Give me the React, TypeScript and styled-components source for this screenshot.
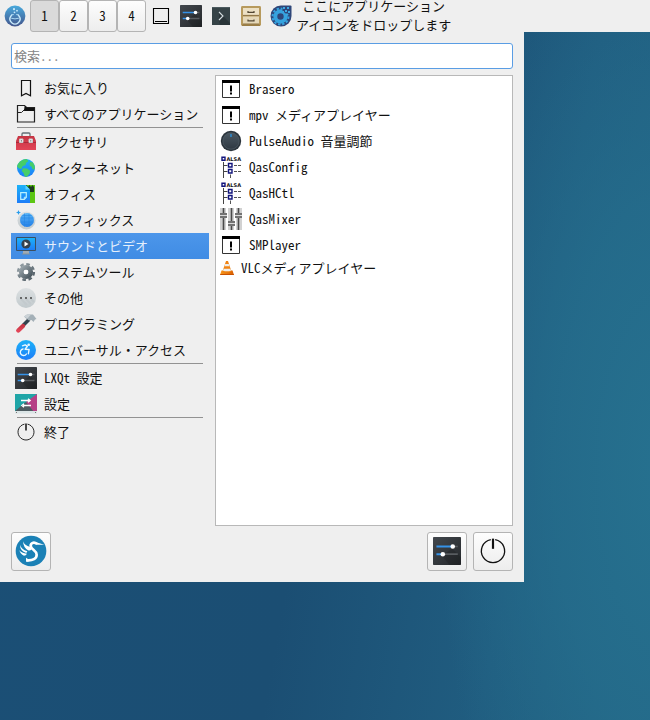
import React, { useState } from "react";
import styled, { createGlobalStyle } from "styled-components";

const GlobalStyle = createGlobalStyle`
  * { box-sizing: border-box; }
  body {
    margin: 0;
    font: 13px/19px "Noto Sans CJK JP", sans-serif;
    font-feature-settings: "hwid", "liga" 0;
    color: #111;
  }
  button, input { font: inherit; font-feature-settings: inherit; color: inherit; }
  svg { display: block; }
`;

const Desktop = styled.div`
  min-height: 100vh;
  background:
    radial-gradient(ellipse 36% 75% at 103% 65%, #26718f 0%, rgba(37, 110, 141, 0.75) 50%, rgba(37, 110, 141, 0) 100%),
    linear-gradient(100deg, #1b4f76 0%, #1b4e73 50%, #205d80 78%, #236383 100%);
`;

const Panel = styled.header`
  display: flex;
  align-items: center;
  height: 32px;
  background: #efefef;
`;

const PanelButton = styled.button`
  display: grid;
  place-items: center;
  flex: none;
  width: 30px;
  height: 32px;
  padding: 0;
  border: 0;
  background: none;
`;

const Pager = styled.div`
  display: flex;
  flex: none;
`;

const bevel = `
  border: 1px solid #b4b4b4;
  border-radius: 3px;
  background: linear-gradient(#fdfdfd, #ededed);
`;

const PagerButton = styled.button`
  ${bevel}
  width: 29px;
  height: 32px;
  padding: 0 0 2px;
  &[aria-pressed="true"] { background: #dadada; }
`;

const DropHint = styled.p`
  margin: 0;
  padding-bottom: 2px;
  text-align: center;
  white-space: pre-line;
`;

const Menu = styled.main`
  display: flex;
  flex-direction: column;
  gap: 6px;
  width: 524px;
  max-width: 100%;
  padding: 11px;
  background: #efefef;
`;

const Search = styled.input`
  width: 100%;
  height: 26px;
  padding: 0 2px 2px;
  border: 1px solid #5a9de4;
  border-radius: 3px;
  outline: 0;
  background: #fff;
  &::placeholder { color: #858585; opacity: 1; }
`;

const Columns = styled.div`
  display: grid;
  grid-template-columns: 198px 1fr;
  gap: 6px;
  min-height: 451px;
`;

const Categories = styled.nav`
  display: flex;
  flex-direction: column;
`;

const Row = styled.button<{ $compact?: boolean }>`
  display: flex;
  align-items: center;
  gap: 7px;
  width: 100%;
  height: ${(p) => (p.$compact ? 20 : 26)}px;
  padding: 0 4px;
  border: 0;
  background: none;
  text-align: left;
  white-space: nowrap;
  &[aria-current="true"] {
    background: linear-gradient(#4c96ea, #408ce4);
    color: #e4effc;
  }
`;

const IconSlot = styled.span<{ $compact?: boolean }>`
  flex: none;
  width: ${(p) => (p.$compact ? 14 : 22)}px;
`;

const Label = styled.span`
  padding-bottom: 2px;
`;

const Separator = styled.hr`
  width: calc(100% - 12px);
  height: 2px;
  margin: 0 6px;
  border: 0;
  border-top: 1px solid #929292;
`;

const AppList = styled.ul`
  margin: 0;
  padding: 0;
  list-style: none;
  border: 1px solid #b8b8b8;
  background: #fff;
`;

const Footer = styled.footer`
  display: flex;
  gap: 6px;
`;

const ToolButton = styled.button<{ $start?: boolean }>`
  ${bevel}
  display: grid;
  place-items: center;
  width: 40px;
  height: 39px;
  padding: 0 0 2px;
  margin-right: ${(p) => (p.$start ? "auto" : "0")};
`;

const HiddenDefs = styled.svg`
  position: absolute;
`;

type IconProps = { size?: number };

const Svg = ({ size = 22, box = 22, children }: { size?: number; box?: number; children: React.ReactNode }) => (
  <svg width={size} height={size} viewBox={`0 0 ${box} ${box}`} fill="none" aria-hidden="true">
    {children}
  </svg>
);

const Gradients = () => (
  <HiddenDefs width="0" height="0" aria-hidden="true">
    <defs>
      <linearGradient id="dark" x1="0" y1="0" x2="1" y2="1"><stop stopColor="#42474d" /><stop offset="1" stopColor="#25282b" /></linearGradient>
      <linearGradient id="flask" x1="0" y1="0" x2="0" y2="1"><stop stopColor="#49a9dc" /><stop offset="1" stopColor="#43568d" /></linearGradient>
      <linearGradient id="red" x1="0" y1="0" x2="0" y2="1"><stop stopColor="#c53543" /><stop offset="1" stopColor="#e24557" /></linearGradient>
      <linearGradient id="sky" x1="0" y1="0" x2="0" y2="1"><stop stopColor="#1cb2f8" /><stop offset="1" stopColor="#1d7df8" /></linearGradient>
      <linearGradient id="lens" x1="0" y1="0" x2="0" y2="1"><stop stopColor="#58b4f6" /><stop offset="1" stopColor="#2580ea" /></linearGradient>
      <linearGradient id="steel" x1="0" y1="0" x2="1" y2="1"><stop stopColor="#99a4aa" /><stop offset="1" stopColor="#4a575f" /></linearGradient>
      <linearGradient id="silver" x1="0" y1="0" x2="0" y2="1"><stop stopColor="#dce0e2" /><stop offset="1" stopColor="#c2cacd" /></linearGradient>
      <linearGradient id="knob" x1="0" y1="0" x2="0" y2="1"><stop stopColor="#4b5862" /><stop offset="1" stopColor="#2f3943" /></linearGradient>
      <linearGradient id="cone" x1="0" y1="0" x2="1" y2="0"><stop stopColor="#f8981d" /><stop offset="1" stopColor="#d85c00" /></linearGradient>
    </defs>
  </HiddenDefs>
);

const FlaskIcon = () => (
  <Svg>
    <circle cx="11" cy="11" r="10.4" fill="url(#flask)" />
    <path d="M8 10 6.800 11.200a5 5 0 1 0 8.400 0L14 10" stroke="#c9eafa" strokeWidth="1.400" />
    <path d="M7.200 9.600h2.600M12.200 9.600h2.600M7.200 13.200q3.800 1.400 7.600 0" stroke="#a9d8f1" />
    <circle cx="10" cy="4.200" r="1.100" fill="#c6e8fa" />
    <circle cx="13" cy="5.700" r=".9" fill="#c6e8fa" />
    <circle cx="10.500" cy="7.300" r=".9" fill="#c6e8fa" />
  </Svg>
);

const DesktopIcon = () => (
  <Svg><path d="M3.500 3.500h15v15h-15zM5 16.500h12" stroke="#000" strokeWidth="1.100" /></Svg>
);

const SlidersIcon = ({ size = 22 }: IconProps) => (
  <Svg size={size}>
    <rect width="22" height="22" rx=".6" fill="url(#dark)" />
    <path d="m15 9 7 7v6H13L7 15Z" fill="#000" opacity=".15" />
    <path d="M15 7.500h4.500M7 13.500h12.500" stroke="#585c60" strokeWidth="1.300" />
    <path d="M2.700 7.500H15M2.700 13.500H7" stroke="#3592e8" strokeWidth="1.500" />
    <circle cx="15.500" cy="7.500" r="1.800" fill="#fff" />
    <circle cx="7.700" cy="13.500" r="1.800" fill="#fff" />
  </Svg>
);

const TerminalIcon = () => (
  <Svg size={18} box={18}>
    <rect width="18" height="18" fill="#364347" />
    <path d="M0 0h18v1H0Z" fill="#4c5a5f" />
    <path d="m7 5 4 4 7 7v2H8L7 13Z" fill="#293438" />
    <path d="m7 5 4 4-4 4" stroke="#d5dde0" strokeWidth="1.100" />
  </Svg>
);

const CabinetIcon = () => (
  <Svg size={20} box={20}>
    <rect width="20" height="20" rx="1.400" fill="#b79a5d" />
    <path d="M1 18.500h18V20H1Z" fill="#9a7d44" />
    <rect x="2" y="2" width="16" height="7.400" fill="#ece0c4" />
    <rect x="2" y="10.500" width="16" height="7.500" fill="#e5d8b9" />
    <path d="M2 9.400h16M2 18h16" stroke="#8b7242" />
    <path d="M7 5v1.300h6V5M7 13.500v1.300h6v-1.300" stroke="#524632" strokeWidth="1.200" />
  </Svg>
);

const GearDropIcon = () => (
  <Svg>
    <path d="M11 .5h9.500q1 0 1 1V11A10.500 10.500 0 1 1 11 .5Z" fill="#2e4679" />
    <circle cx="10.500" cy="11.500" r="5.200" stroke="#35a3df" strokeWidth="4" />
    <circle cx="10.500" cy="11.500" r="8" stroke="#35a3df" strokeWidth="2" strokeDasharray="2.400 1.790" />
    <path d="M12.500 1h8.500v8.500h-4l-4.500-3.500Z" fill="#2e4679" />
    <path d="M13 2h2v2h-2zM17 2h2v2h-2zM15 5h2v2h-2zM18 6h2v2h-2zM12.500 6H14v1.500h-1.500zM16 8.500h2v2h-2z" fill="#3da8e2" />
  </Svg>
);

const BookmarkIcon = () => (
  <Svg><path d="M6.500 3.500h9v15.200L11 16.500l-4.500 2.200Z" stroke="#111" strokeWidth="1.200" /></Svg>
);

const FolderIcon = () => (
  <Svg>
    <path d="M2.500 2.500h7l2 2h8v14.500h-17Z" stroke="#222" strokeWidth="1.200" />
    <path d="M2.500 9.500h4l3-3h10" stroke="#222" />
    <path d="M9.500 3.500h1.500l1 1.500h7.500v3H9Z" fill="#111" />
  </Svg>
);

const ToolboxIcon = () => (
  <Svg>
    <path d="M7 6V3q0-1 1-1h6q1 0 1 1v3" stroke="#657077" strokeWidth="1.300" />
    <path d="M3 5h16l2 5v9H1v-9Z" fill="url(#red)" />
    <path d="M1 11h20v1H1Z" fill="#a82b3a" />
    <path d="M4.500 8H8v3.500H4.500zM14 8h3.500v3.500H14z" fill="#fff" stroke="#c6cacc" />
    <path d="M5.700 9.200h1.200v1.200H5.700zM15.200 9.200h1.200v1.200h-1.200z" fill="#555" />
  </Svg>
);

const GlobeIcon = () => (
  <Svg>
    <circle cx="11" cy="11" r="9" fill="url(#sky)" />
    <path d="M5 4.500q5-3 7-2.300l1.400 2-2.200 1.500-.8 2.600-2.700.8L6.300 12l-2.600-.7L2 9.500Q2.600 6.500 5 4.500ZM8 11.200l4 .3 3.200 2.200-.6 3-2.700 3.100h-2L8.500 16l-1.800-2ZM15 5l3 .6q2.200 3 1.800 7l-2.200-.4-1.100-2.400-2-1.600Z" fill="#46cd68" />
  </Svg>
);

const OfficeIcon = () => (
  <Svg>
    <path d="M11 2h9v18h-9Z" fill="#5cc613" />
    <path d="M9 2h2.500l1.500 2 1.500-2L16 4l1.500-2L19 4v5h-6Z" fill="#1d3b20" />
    <path d="M2 2h8.500L15 6.500V20H2Z" fill="url(#sky)" />
    <path d="m10.500 2 4.500 4.500h-4.500Z" fill="#54d4ff" />
    <path d="M5.700 9.700h5.600v4.600l-2 2H5.700Z" stroke="#b9f0ff" strokeWidth="1.200" />
    <path d="M9.300 16.200v-2h2" stroke="#b9f0ff" />
  </Svg>
);

const GraphicsIcon = () => (
  <Svg>
    <circle cx="11.500" cy="11.500" r="9" fill="url(#silver)" />
    <circle cx="12" cy="11" r="7" fill="url(#lens)" />
    <path d="M5.500 9h13M5.500 13h13M9.500 4.500v13M14 4.500v13M7.500 6.500h9M7.500 15.500h9" stroke="#2787e3" strokeWidth=".6" />
    <path d="m3.500 1 .7 1.800 1.800.7-1.800.7L3.500 6l-.7-1.800L1 3.500l1.800-.7Z" fill="#299eed" />
  </Svg>
);

const VideoIcon = () => (
  <Svg>
    <path d="M8 16h6v3H8Z" fill="#a0abb3" />
    <path d="M7 18.500h8v1H7Z" fill="#84919b" />
    <rect x="1" y="2" width="20" height="14" rx="1" fill="#3a4f62" />
    <path d="M2 3h18v12H2Z" fill="url(#sky)" />
    <circle cx="11" cy="9" r="4.600" fill="#34414f" />
    <path d="m9.500 6.500 4 2.500-4 2.500Z" fill="#fff" />
  </Svg>
);

const GearIcon = () => (
  <Svg>
    <circle cx="11" cy="11" r="4.700" strokeWidth="4.800" stroke="url(#steel)" />
    <circle cx="11" cy="11" r="7.900" strokeWidth="2.400" strokeDasharray="3.600 2.605" stroke="url(#steel)" />
    <circle cx="11" cy="11" r="2.300" fill="#fff" />
  </Svg>
);

const DotsIcon = () => (
  <Svg>
    <circle cx="11" cy="11" r="10" fill="url(#silver)" />
    <path d="m6 12 6 6M11 12l5 5M16 12l3 3" stroke="#c3cacd" strokeWidth="2" />
    <circle cx="6" cy="11" r="1" fill="#444" /><circle cx="11" cy="11" r="1" fill="#444" /><circle cx="16" cy="11" r="1" fill="#444" />
  </Svg>
);

const HammerIcon = () => (
  <Svg>
    <path d="M14 6.500 8 12.500" stroke="#34434d" strokeWidth="3.600" />
    <path d="m8 13-4.700 4.500" stroke="url(#red)" strokeWidth="4.400" strokeLinecap="round" />
    <path d="m9 3.500 3-2h6l3.500 4.500-1.500.5-1.500 2.500-2-2-2.500.5L10.500 5Z" fill="#a4b0b7" />
    <path d="m9 3.500 3-2h4l-3.500 4Z" fill="#ccd3d7" />
  </Svg>
);

const AccessIcon = () => (
  <Svg>
    <circle cx="11" cy="11" r="10" fill="url(#sky)" />
    <circle cx="13.700" cy="5.800" r="1.300" fill="#e9f8ff" />
    <path d="m7.500 6.800 2.600-1 2.300 1.400-2.300 3 4 .3-.7 4.200M8 10a3.300 3.300 0 1 0 3.400 5" stroke="#e9f8ff" strokeWidth="1.400" strokeLinejoin="round" strokeLinecap="round" />
  </Svg>
);

const PreferencesIcon = () => (
  <Svg>
    <path d="M0 1h22v18H0Z" fill="#1fa5a7" />
    <path d="M22 1v18h-5L11 9Z" fill="#b64086" />
    <path d="m0 18 11-9 8 10H0Z" fill="#4d5b60" />
    <path d="M0 18h22v2.500H0Z" fill="#dbe5e6" />
    <path d="M6 7.500h9M8 12.500h8M13 5.700l2.200 1.800L13 9.300M9 10.700l-2.200 1.800L9 14.300" stroke="#fff" strokeWidth="1.300" />
    <path d="M1 19.500h1M20 19.500h1" stroke="#777" />
  </Svg>
);

const PowerIcon = ({ size = 22 }: IconProps) => (
  <Svg size={size}>
    <path d="M9.500 3.150a8 8 0 1 0 3 0" stroke="#111" strokeWidth=".9" />
    <path d="M11 2.500v7" stroke="#111" strokeWidth="1.500" />
  </Svg>
);

const WindowIcon = () => (
  <Svg>
    <path d="M2.500 2.500h17v17h-17Z" fill="#fff" stroke="#333" />
    <path d="M2 2h18v3H2Z" fill="#000" />
    <path d="M11 7.500v6M11 14.500v2" stroke="#000" strokeWidth="2" />
  </Svg>
);

const KnobIcon = () => (
  <Svg>
    <circle cx="11" cy="11" r="10.200" fill="#2b343c" />
    <circle cx="11" cy="11" r="8.200" fill="url(#knob)" stroke="#56636d" strokeWidth=".6" />
    <path d="M11 4v3" stroke="#259bf0" strokeWidth="1.200" />
  </Svg>
);

const AlsaLabel = styled.text`
  font: bold 5px "DejaVu Sans", sans-serif;
  fill: #111;
`;

const AlsaIcon = () => (
  <Svg>
    <path d="M3.500 6v16M3.500 9.500h4M3.500 15.500h4" stroke="#444" />
    <path d="M14 9.500h8M14 15.500h8" stroke="#555" strokeDasharray="3 1" />
    <path d="M10.500 18.500V22" stroke="#555" />
    <path d="M2 1.200h3v3H2zM8.500 7.500h3.500v3.500H8.500zM8.500 13.500h3.500V17H8.500z" fill="#fff" stroke="#10137c" strokeWidth="1.400" />
    <AlsaLabel x="6.500" y="4.500">ALSA</AlsaLabel>
  </Svg>
);

const MixerIcon = () => (
  <Svg>
    <path d="M0 0h6v22H0zM8 0h6v22H8zM16 0h6v22h-6z" fill="#d2d2d2" />
    <path d="M3.500 0v22M11.500 0v22M18.500 0v22" stroke="#4a4a4a" strokeWidth="1.600" />
    <path d="M0 5h7v5H0zM8 13h7v5H8zM15 5h7v5h-7z" fill="#737373" />
    <path d="M0 7.500h7M8 15.500h7M15 7.500h7" stroke="#d8d8d8" />
  </Svg>
);

const ConeIcon = () => (
  <Svg size={14} box={14}>
    <path d="M1.500 9.500h11L14 14H0Z" fill="url(#cone)" />
    <path d="M6 0h2l3.500 10.500q-4.500 2-9 0Z" fill="#f08312" />
    <path d="M5.200 3h3.600l.7 2.200h-5ZM3.600 7.700h6.800l.6 2q-4 1.300-8 0Z" fill="#eceeee" />
    <path d="M.3 13h13.400v1H.3Z" fill="#c95100" />
  </Svg>
);

const BirdIcon = () => (
  <Svg size={32} box={96}>
    <circle cx="48" cy="48" r="46" fill="#1b81b6" />
    <path d="M66 27C56 19 44 25 48 36C51 44 65 47 65 59C65 71 53 77 37 76" stroke="#fff" strokeWidth="8" />
    <path d="M59 20 88 29H64ZM33 68l7 5v7h-7Z" fill="#fff" />
    <path d="M24 19q4 13 22 17l4 6q-4 6-11 4Q25 38 24 19ZM15 29q4 14 22 20l-3 5Q15 48 15 29ZM13 46q6 9 23 10-3 6-9 6-11-4-14-16Z" fill="#fff" />
  </Svg>
);

const launchers = [
  { name: "デスクトップの表示", Icon: DesktopIcon },
  { name: "LXQt 設定", Icon: SlidersIcon },
  { name: "端末", Icon: TerminalIcon },
  { name: "ファイルマネージャー", Icon: CabinetIcon },
  { name: "ソフトウェア", Icon: GearDropIcon },
];

const groups = [
  [
    { name: "お気に入り", Icon: BookmarkIcon },
    { name: "すべてのアプリケーション", Icon: FolderIcon },
  ],
  [
    { name: "アクセサリ", Icon: ToolboxIcon },
    { name: "インターネット", Icon: GlobeIcon },
    { name: "オフィス", Icon: OfficeIcon },
    { name: "グラフィックス", Icon: GraphicsIcon },
    { name: "サウンドとビデオ", Icon: VideoIcon },
    { name: "システムツール", Icon: GearIcon },
    { name: "その他", Icon: DotsIcon },
    { name: "プログラミング", Icon: HammerIcon },
    { name: "ユニバーサル・アクセス", Icon: AccessIcon },
  ],
  [
    { name: "LXQt 設定", Icon: SlidersIcon },
    { name: "設定", Icon: PreferencesIcon },
  ],
  [{ name: "終了", Icon: PowerIcon }],
];

const apps = [
  { name: "Brasero", Icon: WindowIcon },
  { name: "mpv メディアプレイヤー", Icon: WindowIcon },
  { name: "PulseAudio 音量調節", Icon: KnobIcon },
  { name: "QasConfig", Icon: AlsaIcon },
  { name: "QasHCtl", Icon: AlsaIcon },
  { name: "QasMixer", Icon: MixerIcon },
  { name: "SMPlayer", Icon: WindowIcon },
  { name: "VLCメディアプレイヤー", Icon: ConeIcon, compact: true },
];

export default function App() {
  const [desk, setDesk] = useState(1);
  const [category, setCategory] = useState("サウンドとビデオ");

  return (
    <Desktop>
      <GlobalStyle />
      <Gradients />
      <Panel>
        <PanelButton aria-label="アプリケーションメニュー"><FlaskIcon /></PanelButton>
        <Pager>
          {[1, 2, 3, 4].map((n) => (
            <PagerButton key={n} aria-pressed={n === desk} onClick={() => setDesk(n)}>{n}</PagerButton>
          ))}
        </Pager>
        {launchers.map(({ name, Icon }) => (
          <PanelButton key={name} aria-label={name}><Icon /></PanelButton>
        ))}
        <DropHint>{"ここにアプリケーション\nアイコンをドロップします"}</DropHint>
      </Panel>
      <Menu>
        <Search type="text" placeholder="検索..." aria-label="検索" />
        <Columns>
          <Categories>
            {groups.map((group, i) => (
              <React.Fragment key={i}>
                {i > 0 && <Separator />}
                {group.map(({ name, Icon }) => (
                  <Row key={name} aria-current={name === category} onClick={() => setCategory(name)}>
                    <IconSlot><Icon /></IconSlot>
                    <Label>{name}</Label>
                  </Row>
                ))}
              </React.Fragment>
            ))}
          </Categories>
          <AppList>
            {apps.map(({ name, Icon, compact }) => (
              <li key={name}>
                <Row $compact={compact}>
                  <IconSlot $compact={compact}><Icon /></IconSlot>
                  <Label>{name}</Label>
                </Row>
              </li>
            ))}
          </AppList>
        </Columns>
        <Footer>
          <ToolButton $start aria-label="LXQt について"><BirdIcon /></ToolButton>
          <ToolButton aria-label="設定"><SlidersIcon size={28} /></ToolButton>
          <ToolButton aria-label="終了"><PowerIcon size={32} /></ToolButton>
        </Footer>
      </Menu>
    </Desktop>
  );
}
